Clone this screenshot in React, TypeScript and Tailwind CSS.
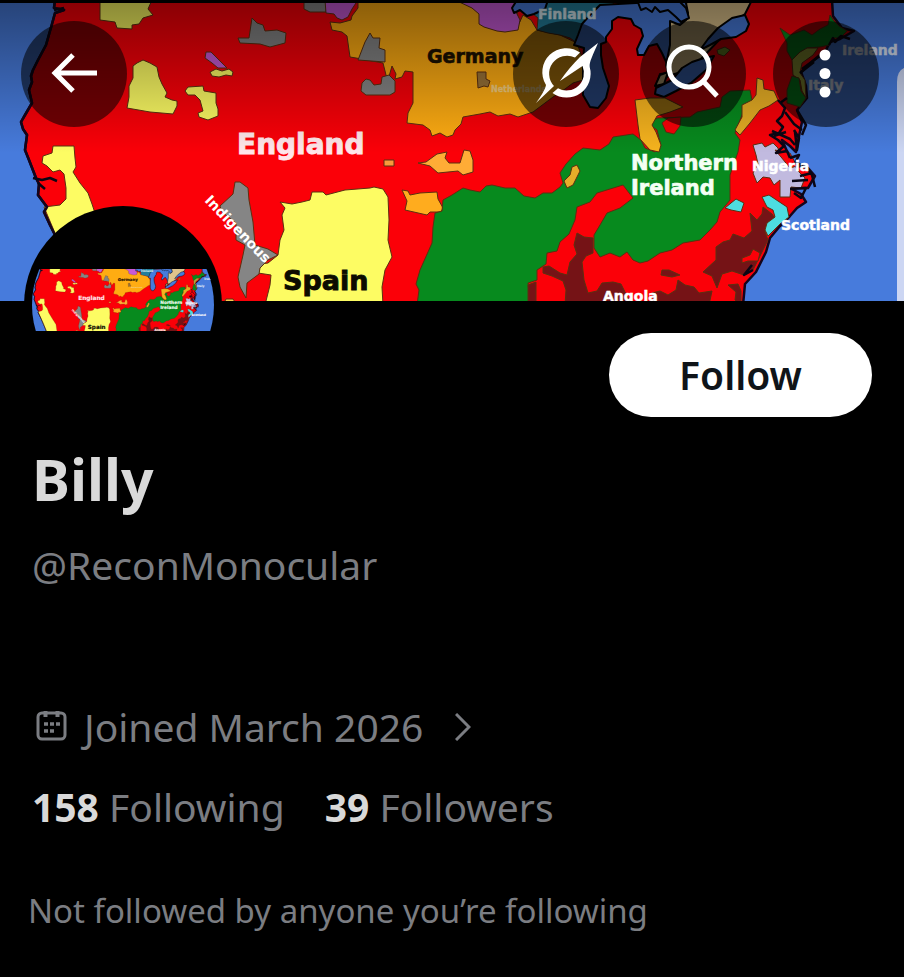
import type { ReactNode } from "react";

type Region = { fill: string; points: string; edge?: string };

const COAST =
  "55,0 54,8 64,10 55,13 52,24 46,45 38,60 33,70 31,76 32,82 29,90 32,103 25,115 21,122 23,129 27,135 25,150 29,160 36,178 39,184 38,195 47,207 44,212 50,225 60,245 70,268 85,305";

const LAND =
  COAST +
  " 743,305 745,284 756,272 766,252 770,238 780,226 790,216 797,208 806,202 801,194 790,188 808,188 815,176 808,168 797,166 790,158 782,140 790,146 796,152 799,136 802,122 797,110 807,98 806,86 801,72 814,60 826,50 830,42 840,39 854,31 842,28 833,16 832,0";

const REGIONS: Region[] = [
  // Yellow enclaves
  { fill: "#fdfc63", points: "100,0 152,0 148,9 153,15 143,18 139,24 132,25 132,29 117,28 115,22 100,20" },
  { fill: "#fdfc63", points: "143,60 150,63 157,67 159,77 162,84 167,93 165,97 172,100 177,101 177,106 173,114 150,112 127,108 129,97 129,86 133,78 133,66 137,63" },
  { fill: "#fdfc63", points: "188,87 203,86 204,91 216,93 216,103 218,109 218,116 208,120 199,117 198,113 203,111 200,100 195,95 188,95 185,91" },
  { fill: "#fdfc63", points: "210,72 216,69 222,71 229,69 233,72 232,76 226,75 219,77 212,76" },
  { fill: "#fdfc63", points: "53,146 74,146 75,158 76,167 73,172 80,183 88,193 92,204 95,213 114,245 130,270 135,305 85,305 70,268 60,245 44,207 60,205 66,199 66,188 64,174 60,170 53,172 47,166 42,163 43,156 52,153" },
  { fill: "#fdfc63", points: "280,202 292,204 302,202 310,200 312,192 323,192 326,195 345,190 370,188 374,187 383,189 388,197 389,220 388,240 392,257 385,270 382,287 383,305 265,305 270,285 271,275 258,273 261,264 268,263 278,255 280,240 284,230 282,215 285,208" },
  { fill: "#f7c84e", points: "223,305 226,299 233,299 237,305" },
  // Orange block and its islands
  { fill: "#ffac12", points: "358,0 358,8 352,16 351,20 340,23 330,22 332,30 342,32 347,36 350,57 356,58 383,63 386,75 388,80 392,66 396,74 395,79 402,77 405,71 413,72 413,83 413,103 408,113 407,123 423,125 430,130 432,136 440,133 447,137 453,135 455,130 461,124 463,117 480,114 490,112 498,116 510,114 518,117 533,112 545,103 553,97 565,89 573,83 583,80 583,60 577,43 560,35 537,30 531,20 523,15 517,28 517,0" },
  { fill: "#ffac36", points: "418,163 426,162 437,154 447,152 445,158 449,163 460,163 464,150 470,151 473,160 473,172 463,175 458,171 438,173 430,166" },
  { fill: "#ffac1e", points: "402,190 408,191 410,195 420,193 437,192 438,199 443,208 441,212 430,212 427,215 405,210 407,201" },
  { fill: "#f99a3c", points: "384,160 394,160 394,166 384,166" },
  // Grey enclaves
  { fill: "#858585", points: "238,38 249,38 252,18 257,23 263,25 265,31 277,30 286,33 285,43 270,47 260,44 240,43" },
  { fill: "#858585", points: "358,60 365,42 370,33 373,38 380,38 379,48 385,50 385,62" },
  { fill: "#858585", points: "362,83 366,79 370,80 374,85 381,84 382,77 389,75 395,81 395,92 390,95 366,95 361,91" },
  { fill: "#858585", points: "304,0 326,0 326,12 310,12 304,9" },
  { fill: "#858585", points: "235,182 240,182 248,188 249,200 253,222 255,245 268,249 278,255 268,260 260,268 259,274 247,283 246,298 240,287 238,277 243,255 245,245 236,240 236,223 222,212 220,206 233,194" },
  // Purple
  { fill: "#c75ad6", points: "325,0 358,0 352,9 348,17 342,20 337,18 334,14 326,13" },
  { fill: "#c75ad6", points: "455,0 530,0 515,10 520,20 518,30 505,32 497,31 484,27 479,24 479,14 472,8" },
  { fill: "#c75ad6", points: "206,52 211,52 219,60 227,68 218,68 212,63 205,58" },
  { fill: "#9a7338", points: "477,72 486,72 486,79 490,81 488,87 484,86 478,88" },
  // Teal and the lakes
  { fill: "#237e9c", points: "540,0 618,0 605,10 590,18 582,28 577,43 570,38 560,35 548,33 537,30 538,18 533,14" },
  { fill: "#477bdc", edge: "#000", points: "517,0 512,8 514,13 520,10 527,16 534,14 545,9 548,0" },
  { fill: "#477bdc", edge: "#000", points: "600,5 590,15 582,24 578,35 574,45 584,48 583,62 583,80 583,95 590,107 598,108 606,98 609,86 603,68 601,55 601,44 606,42 606,37 612,29 612,21 618,17 631,19 634,25 641,29 643,36 637,49 638,55 644,55 649,46 657,44 662,53 668,66 675,60 700,34 690,0" },
  { fill: "#dfc48c", edge: "#000", points: "686,3 688,13 686,20 680,25 670,21 670,45 666,65 668,73 660,74 656,86 668,76 688,70 700,60 722,37 733,23 745,14 752,0 690,0" },
  { fill: "#dfc48c", edge: "#000", points: "660,75 668,72 664,84 655,86" },
  { fill: "#477bdc", edge: "#000", points: "656,88 672,80 682,68 692,62 704,58 714,56 706,70 691,83 676,91 664,97 655,94" },
  { fill: "#477bdc", edge: "#000", points: "700,50 708,39 718,28 732,18 745,15 749,24 746,31 736,37 721,39 710,45" },
  { fill: "#477bdc", edge: "#000", points: "637,0 641,10 646,8 652,12 655,7 660,12 668,10 676,17 681,22 689,18 686,8 680,2" },
  { fill: "#79a02b", points: "717,50 725,47 730,50 724,56 718,54" },
  // Central green
  { fill: "#078a1e", points: "443,200 452,195 463,188 470,190 480,192 486,186 492,185 505,188 515,188 524,196 535,198 543,193 552,193 560,187 563,183 560,173 566,164 575,154 583,148 600,150 609,144 613,137 633,134 641,140 645,148 655,152 661,146 657,130 650,125 657,118 690,117 697,112 720,107 722,97 730,91 750,90 752,100 742,115 735,133 740,140 738,152 730,175 730,200 720,212 717,222 710,230 700,240 683,243 672,250 660,253 648,261 640,263 633,260 627,252 620,257 610,253 600,257 594,248 594,235 600,225 607,213 620,208 633,198 623,185 610,189 597,193 590,202 577,207 575,220 569,234 560,242 557,251 547,253 546,264 537,270 537,280 528,283 530,305 417,305 419,290 416,284 420,270 428,252 432,243 433,227 435,213 442,211" },
  { fill: "#fb0008", points: "662,123 668,118 681,117 680,126 674,134 666,132" },
  { fill: "#f6b31e", points: "635,100 650,98 665,98 683,107 670,112 657,116 652,125 656,132 661,145 659,152 650,150 640,139 638,125" },
  { fill: "#e7ad29", points: "564,181 570,175 572,167 577,165 580,171 576,179 573,185 567,188" },
  // Dark red
  { fill: "#751316", points: "577,233 584,237 593,238 593,253 586,256 582,262 584,280 588,293 597,291 602,283 613,282 621,284 625,292 632,305 565,305 566,290 563,281 552,276 543,273 543,267 549,266 560,273 567,275 570,262 577,254 574,245" },
  { fill: "#751316", points: "528,285 536,282 536,305 528,305" },
  { fill: "#751316", points: "763,207 772,214 776,220 767,224 765,232 768,240 760,256 753,270 744,275 732,271 722,274 717,288 712,276 703,272 716,260 716,247 723,242 730,240 733,234 744,238 752,231 750,213 757,220 762,214" },
  { fill: "#fb0008", points: "742,258 750,255 753,249 760,253 758,261 748,261 742,263" },
  { fill: "#751316", points: "655,305 652,293 660,291 668,295 676,290 678,280 685,285 694,287 699,293 712,291 709,305" },
  { fill: "#751316", points: "662,270 669,270 680,275 672,277 661,275" },
  { fill: "#751316", points: "728,285 738,284 741,291 741,305 735,300 736,292" },
  // North-east
  { fill: "#078a1e", points: "780,28 790,35 804,30 812,35 820,29 828,25 830,15 834,21 839,26 847,31 840,38 832,38 829,45 820,47 807,48 800,56 792,60 787,51 787,43" },
  { fill: "#a7b13e", points: "792,60 800,52 807,48 818,48 813,55 802,63 800,73 805,80 806,98 802,91 800,80 793,75" },
  { fill: "#078a1e", points: "792,76 799,78 801,91 806,98 800,107 787,103 787,90" },
  { fill: "#e6ad24", points: "757,78 763,80 764,89 774,91 778,100 769,106 760,110 750,123 740,135 735,130 742,117 742,105 752,100 756,95" },
  { fill: "#c1badf", points: "753,145 762,143 765,147 773,143 778,148 779,153 788,158 793,163 799,172 805,178 801,188 791,187 790,197 780,197 780,180 774,185 770,178 763,177 757,183 753,173 758,164 756,155" },
  { fill: "#fb0008", points: "775,150 790,153 797,166 790,168 781,157" },
  { fill: "#4ddde0", points: "762,197 769,195 778,201 787,207 789,217 781,223 768,236 765,230 767,223 775,217 773,210 767,207" },
  { fill: "#4ddde0", points: "725,208 731,203 736,199 744,203 741,212 731,210" },
];

const INLETS = [
  "M778,100 L785,108 782,116 777,121 783,127 779,133 770,135 778,140 784,146 776,153 787,151 790,158",
  "M787,98 L780,103 M797,110 L806,125 802,135 M795,132 L797,150 799,138 794,130",
  "M802,130 L794,124 785,112 M772,131 L790,139 795,145 M774,136 L786,132",
  "M790,158 L799,155 795,163 806,166 812,175 815,187 M800,176 L812,173 M792,181 L808,180 M790,189 L806,188 801,198 794,193",
  "M800,73 L814,62 M802,69 L821,55 M829,45 L833,38 835,42 841,36 850,39",
  "M33,178 L42,180 50,178 57,181 M38,183 L45,189 M54,10 L64,8",
  "M753,270 L744,275 752,265",
];

const LABELS = [
  { text: "England", x: 237, y: 154, size: 28, fill: "#ffe6ea" },
  { text: "Spain", x: 283, y: 290, size: 27, fill: "#0c0b00" },
  { text: "Germany", x: 427, y: 63, size: 19, fill: "#1c1000" },
  { text: "Northern", x: 631, y: 170, size: 21, fill: "#f4fff4" },
  { text: "Ireland", x: 631, y: 195, size: 21, fill: "#f4fff4" },
  { text: "Finland", x: 538, y: 19, size: 14, fill: "#d5e8ef" },
  { text: "Netherlands", x: 491, y: 92, size: 8, fill: "#f4cf83" },
  { text: "Nigeria", x: 752, y: 171, size: 14, fill: "#ffffff" },
  { text: "Scotland", x: 781, y: 230, size: 14, fill: "#ffffff" },
  { text: "Angola", x: 603, y: 301, size: 14, fill: "#ffffff" },
  { text: "Ireland", x: 842, y: 55, size: 14, fill: "#dce4f5" },
  { text: "Italy", x: 808, y: 90, size: 14, fill: "#dce4f5" },
];

function MapArt({ className }: { className: string }) {
  return (
    <svg viewBox="0 3 904 298" preserveAspectRatio="xMidYMid slice" className={className} aria-hidden="true">
      <rect width="904" height="305" fill="#477bdc" />
      <polygon points={LAND} fill="#fb0008" stroke="#14051c" strokeWidth="2.5" strokeLinejoin="round" />
      {REGIONS.map((r, i) => (
        <polygon
          key={i}
          points={r.points}
          fill={r.fill}
          stroke={r.edge ?? "#5c3010"}
          strokeWidth={r.edge ? 2 : 1}
          strokeLinejoin="round"
        />
      ))}
      <polyline points={COAST} fill="none" stroke="#14051c" strokeWidth="2.5" strokeLinejoin="round" />
      {INLETS.map((d) => (
        <path key={d} d={d} fill="none" stroke="#0a0614" strokeWidth="2.5" strokeLinejoin="round" />
      ))}
      <path d="M904 68 Q897 71 897 82 V305 H904Z" fill="#ccd6f3" />
      <g fontFamily="'DejaVu Sans', sans-serif" fontWeight="700">
        {LABELS.map((l, i) => (
          <text key={i} x={l.x} y={l.y} fontSize={l.size} fill={l.fill} stroke={l.fill} strokeWidth={l.size / 30}>
            {l.text}
          </text>
        ))}
        <text transform="translate(204 201) rotate(46)" fontSize="14" fill="#ffffff">
          Indigenous
        </text>
      </g>
    </svg>
  );
}

function RoundButton({ label, children }: { label: string; children: ReactNode }) {
  return (
    <button
      type="button"
      aria-label={label}
      className="flex size-[106px] shrink-0 items-center justify-center rounded-full bg-black/55 text-white"
    >
      {children}
    </button>
  );
}

function BackIcon() {
  return (
    <svg viewBox="0 0 106 106" className="size-full" fill="none" stroke="currentColor" strokeWidth="5" aria-hidden="true">
      <path d="M76 52H33M52 34L34 52L52 70" />
    </svg>
  );
}

function GrokIcon() {
  return (
    <svg viewBox="0 0 106 106" className="size-full" fill="currentColor" aria-hidden="true">
      <path d="M67 31.500A24 24 0 0 0 33 64C32 69 28 75 23 82L41 65A18 18 0 0 1 62 36.500Z" />
      <path d="M85 22L67 36C60 43 53 51 47 60L69.500 45A17.500 17.500 0 0 1 45 67.300L39.500 72A24 24 0 0 0 76.700 46C76 41 80 34 85 22Z" />
    </svg>
  );
}

function SearchIcon() {
  return (
    <svg viewBox="0 0 106 106" className="size-full" fill="none" stroke="currentColor" strokeWidth="5" aria-hidden="true">
      <circle cx="49" cy="46" r="20" />
      <path d="M63 60L77 75" />
    </svg>
  );
}

function MoreIcon() {
  return (
    <svg viewBox="0 0 106 106" className="size-full" fill="currentColor" aria-hidden="true">
      <circle cx="52" cy="34" r="5.500" />
      <circle cx="52" cy="52.500" r="5.500" />
      <circle cx="52" cy="71" r="5.500" />
    </svg>
  );
}

function CalendarIcon() {
  return (
    <svg viewBox="0 0 36 36" className="size-9 shrink-0" aria-hidden="true">
      <rect x="6" y="4" width="27" height="26" rx="4" fill="none" stroke="currentColor" strokeWidth="3" />
      <path d="M13.500 2V8M25.500 2V8" stroke="currentColor" strokeWidth="4" />
      <path d="M12 15h4M18 15h4M24 15h4M12 22h4M18 22h4" stroke="currentColor" strokeWidth="3.500" />
    </svg>
  );
}

export default function App() {
  return (
    <div className="min-h-screen bg-black pt-[3px] font-['Noto_Sans','Open_Sans',sans-serif] text-[#7b7d82]">
      <header className="relative h-[298px] overflow-hidden">
        <MapArt className="absolute inset-0 size-full" />
        <div className="absolute inset-x-0 top-0 h-[150px] bg-linear-to-b from-black/45 to-transparent" />
        <nav className="relative flex items-center justify-between px-[21px] pt-[18px]">
          <RoundButton label="Back">
            <BackIcon />
          </RoundButton>
          <div className="flex gap-[27px] pr-1">
            <div className="flex gap-[21px]">
              <RoundButton label="Grok">
                <GrokIcon />
              </RoundButton>
              <RoundButton label="Search">
                <SearchIcon />
              </RoundButton>
            </div>
            <RoundButton label="More options">
              <MoreIcon />
            </RoundButton>
          </div>
        </nav>
      </header>

      <main className="pb-6">
        <div className="flex items-start justify-between pr-8 pl-6">
          <div className="relative -mt-[95px] size-[198px] rounded-full bg-black p-2">
            <div className="flex size-full items-center overflow-hidden rounded-full bg-black pb-[10px]">
              <MapArt className="h-[62px] w-full" />
            </div>
          </div>
          <button
            type="button"
            className="mt-8 h-[84px] w-[263px] rounded-full bg-white text-[39px] font-semibold text-[#0f1419]"
          >
            Follow
          </button>
        </div>

        <div className="px-8">
          <h1 className="mt-6 text-[57px] leading-[76px] font-bold text-[#d9d9d9]">Billy</h1>
          <p className="mt-5 text-[39px] leading-[56px]">@ReconMonocular</p>

          <button type="button" className="mt-[106px] flex items-center text-[39px] leading-[56px]">
            <CalendarIcon />
            <span className="ml-4">Joined March 2026</span>
            <svg viewBox="0 0 16 28" className="ml-8 h-7 w-4" fill="none" stroke="currentColor" strokeWidth="3" aria-hidden="true">
              <path d="M1 1L14 14L1 27" />
            </svg>
          </button>

          <div className="mt-6 flex gap-10 text-[39px] leading-[56px]">
            <a href="#following">
              <b className="font-bold text-[#d9d9d9]">158</b> Following
            </a>
            <a href="#followers">
              <b className="font-bold text-[#d9d9d9]">39</b> Followers
            </a>
          </div>
        </div>

        <p className="mt-[52px] px-7 text-[33px] leading-[48px]">Not followed by anyone you’re following</p>
      </main>
    </div>
  );
}
